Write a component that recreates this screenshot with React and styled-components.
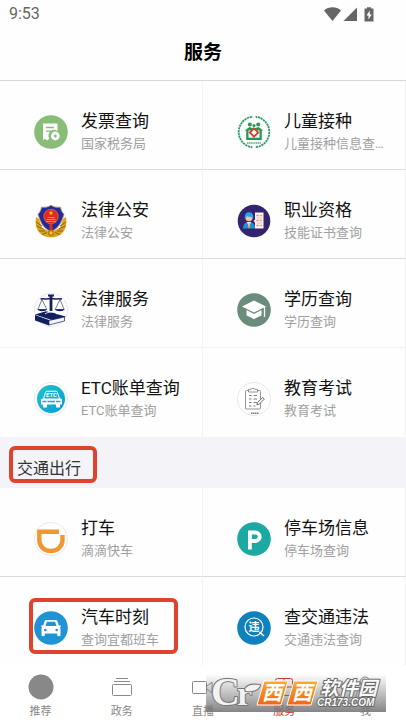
import React from "react";
import styled, { createGlobalStyle, css } from "styled-components";

const GlobalStyle = createGlobalStyle`
  * {
    box-sizing: border-box;
  }

  body {
    margin: 0;
    background: #fefefe;
    font-family: Roboto, "Noto Sans CJK SC", sans-serif;
  }
`;

const InvoiceIcon = () => (
  <svg viewBox="0 0 34 34">
    <circle cx="17" cy="17" r="16.8" fill="#88bd78" />
    <path d="M9 8.5h14.5v7.4a5.6 5.6 0 0 0-6.8 9.3l-1.7-1.5-2 1.8-2-1.8-2 1.6z" fill="#fff" />
    <path d="M12 12.5h8M12 16.2h5" stroke="#88bd78" strokeWidth="1.3" />
    <circle cx="21.3" cy="21" r="4.4" fill="#fff" />
    <path d="M21.3 19.2l1.8 1.8-1.8 1.8-1.8-1.8z" fill="#88bd78" />
  </svg>
);

const PoliceIcon = () => (
  <svg viewBox="0 0 34 34">
    <path d="M2 13C0 24 5 33 17 33.5 29 33 34 24 32 13l-3 2-3 9-9 4-9-4-3-9z" fill="#d9a21f" />
    <path
      d="M2 18l6 4M2.5 22l7 3M5 27h6M8 30.5l5-2M32 18l-6 4M31.5 22l-7 3M29 27h-6M26 30.5l-5-2"
      stroke="#8a5a10"
      strokeWidth="0.9"
    />
    <path
      d="M17 1.2c3 2.2 6 2.2 9.5 2 .5 3 1.5 5 3.5 7-2.5 8-5 14-13 17.3C9 24.2 6.5 18.2 4 10.2c2-2 3-4 3.5-7 3.5.2 6.500.2 9.500-2z"
      fill="#25289c"
      stroke="#b9906a"
      strokeWidth="0.9"
    />
    <circle cx="17" cy="12.5" r="7.3" fill="#df2a1c" stroke="#d98a3a" strokeWidth="0.6" />
    <circle cx="17" cy="9" r="1.7" fill="#f5b335" />
    <path d="M12.5 15.5h9M13.5 13.5h7M12 17.5h10" stroke="#f0a030" strokeWidth="0.9" />
    <path d="M15.5 20h3v6h-3z" fill="#e0301c" />
    <circle cx="17" cy="29" r="3" fill="#b9760f" />
    <circle cx="17" cy="29" r="1.7" fill="#f0c84a" />
  </svg>
);

const VaccineIcon = () => (
  <svg viewBox="0 0 34 34">
    <circle cx="17" cy="17" r="15.3" fill="#fff" stroke="#2d9a62" strokeWidth="1.8" strokeDasharray="2.2 0.6" />
    <path d="M17 0v4M17 30v4" stroke="#fff" strokeWidth="3" />
    <circle cx="12.8" cy="9.5" r="2" fill="#239a54" />
    <circle cx="21.2" cy="9.5" r="2" fill="#239a54" />
    <circle cx="17" cy="10.5" r="1.6" fill="#239a54" />
    <path d="M7.5 15.5l5-3.5 4.5 1.5 4.5-1.5 5 3.5h-1.7V25H9.2v-9.5z" fill="#239a54" />
    <path d="M11.5 15.5h11v7.2h-11z" fill="#fff" />
    <path d="M17 13.3l4.2 4.2-4.2 4.2-4.2-4.2z" fill="#fff" stroke="#e2352b" strokeWidth="1.8" />
    <path d="M10 28h14" stroke="#4aa878" strokeWidth="1.6" strokeDasharray="1.3 0.5" />
  </svg>
);

const JobIcon = () => (
  <svg viewBox="0 0 34 34">
    <circle cx="17" cy="17" r="16.3" fill="#34236f" />
    <path d="M6 24.5c0-5 2.5-6.5 6-6.5s6 1.5 6 6.5z" fill="#1f8fd8" />
    <path d="M10 18l2 5 2-5z" fill="#f4f6ff" />
    <path d="M11.5 19h1l.5 4-1 1.5-1-1.5z" fill="#f0a64a" />
    <circle cx="12" cy="13.5" r="3.7" fill="#e9c3ac" />
    <path
      d="M7.8 14c-.5-4 1.7-5.8 4.2-5.800s4.800 1.800 4.200 5.800c-1-1.600-5-.4-6-2-.5 1.200-1.600 1.300-2.400 2z"
      fill="#27a5e6"
    />
    <path d="M18 8.500h8.500v16H18v-6L16.500 17l1.500-1.500z" fill="#fff4ee" />
    <path d="M19.500 11.500h2M19.500 16.500h2M19.500 21.500h2" stroke="#e27a87" strokeWidth="1.3" />
    <path d="M22.500 11.500h2.700M22.500 16.500h2.700M22.500 21.500h2.700" stroke="#e9b04e" strokeWidth="1.3" />
    <path d="M19.500 14H25M19.500 19H25" stroke="#b9a6d8" strokeWidth="0.7" />
  </svg>
);

const LawIcon = () => (
  <svg viewBox="0 0 34 34">
    <circle cx="17" cy="17" r="16.5" fill="#fff" stroke="#e0e0e6" strokeWidth="0.8" />
    <path d="M15.6 3h2.800v15h-2.800zM14 1.500h6v2h-6z" fill="#12215e" />
    <path d="M6.500 6c4-.5 7 .5 10.500-.7C20.500 6.500 23.500 5.500 28 6" stroke="#12215e" strokeWidth="1.5" fill="none" />
    <path d="M8 6.500L3.800 16.500h9zM26 6.500l-4.800 10h9z" stroke="#12215e" strokeWidth="0.6" fill="none" />
    <path d="M3.500 16.300H13c-.7 2.600-8.800 2.600-9.500 0zM21 16.300h9.500c-.7 2.600-8.800 2.600-9.500 0z" fill="#12215e" />
    <path d="M1 21.500l11-3.200 20 5.200-13 4z" fill="#12215e" />
    <path d="M1 22v5.500l14 5V27z" fill="#12215e" />
    <path d="M15 27.500L30.500 24v4L15 32z" fill="#f4f5fb" stroke="#12215e" strokeWidth="0.7" />
    <path d="M11 21c3-2.500 9-2.500 12 0" stroke="#fff" strokeWidth="0.9" fill="#12215e" />
  </svg>
);

const EtcIcon = () => (
  <svg viewBox="0 0 34 34">
    <defs>
      <linearGradient id="etc" x1="0" y1="0" x2="1" y2="1">
        <stop offset="0" stopColor="#1fc4cf" />
        <stop offset="1" stopColor="#0899d6" />
      </linearGradient>
    </defs>
    <circle cx="17" cy="17" r="16.5" fill="#fff" stroke="#e2e2e2" strokeWidth="0.8" />
    <circle cx="17" cy="17" r="14" fill="url(#etc)" />
    <path
      d="M9.500 17l2-6.500c.2-.9.8-1.300 1.600-1.300h8.800c.8 0 1.400.4 1.600 1.300l2 6.500"
      stroke="#fff"
      strokeWidth="1"
      fill="none"
    />
    <text x="17.5" y="15" textAnchor="middle" fontSize="6" fontWeight="700" fill="#fff">
      ETC
    </text>
    <path d="M9 16.500h17.300c1 0 1.700.7 1.700 1.700v4.300H7v-4.300c0-1 .8-1.700 2-1.700z" fill="#fff" />
    <path d="M9 22h4v3.500H9zM22 22h4v3.500h-4z" fill="#fff" />
    <path d="M8.500 19.500h4M13.500 19.500H21M22 19.500h4.500" stroke="#14a9d4" strokeWidth="1.5" />
  </svg>
);

const DegreeIcon = () => (
  <svg viewBox="0 0 34 34">
    <circle cx="17" cy="17" r="16.8" fill="#698c7d" />
    <path d="M17 7.500l12 6-12 6-12-6z" fill="#fff" />
    <path d="M9.500 17l7.500 4 7.500-4v5.500c-2.200 1.200-4.500 1.800-7.500 3.700-3-1.900-5.300-2.500-7.500-3.700z" fill="#fff" />
    <path d="M27.500 14v10" stroke="#fff" strokeWidth="1.3" />
  </svg>
);

const ExamIcon = () => (
  <svg viewBox="0 0 34 34">
    <circle cx="17" cy="17" r="16.5" fill="#fff" stroke="#dcdcdc" strokeWidth="0.7" />
    <rect x="8.5" y="8.5" width="15" height="18.5" rx="1" fill="#fff" stroke="#777984" strokeWidth="0.8" />
    <path d="M11.500 7.300H14c.5-1 3.500-1 4 0h2.500V10h-9z" fill="#fff" stroke="#777984" strokeWidth="0.8" />
    <path
      d="M12 13.500h2.500M16.500 13.500H20M12 17h2.500M16.500 17H20M12 20.500h2.500M16.500 20.500H20M12 24h2.500M16.500 24h2"
      stroke="#6d7080"
      strokeWidth="0.9"
    />
    <path d="M20.500 20.500l5.200-5 1.600 1.600-5 5-2.400.8z" fill="#fff" stroke="#555866" strokeWidth="0.9" />
    <path d="M14 31.300h8" stroke="#777b88" strokeWidth="1.5" strokeDasharray="1.5 0.5" />
  </svg>
);

const DidiIcon = () => (
  <svg viewBox="0 0 34 34">
    <circle cx="17" cy="17" r="16.5" fill="#fff" stroke="#dedede" strokeWidth="0.7" />
    <path
      d="M25 9.800H5.300V18c0 6.300 4.700 11 11.500 11s11.700-4.700 11.700-11v-5"
      stroke="#f0982f"
      strokeWidth="4.4"
      fill="none"
    />
  </svg>
);

const ParkingIcon = () => (
  <svg viewBox="0 0 34 34">
    <circle cx="17" cy="17" r="16.8" fill="#1ba9a1" />
    <path d="M12.900 27.500V10.500h5.600a4 4 0 0 1 0 8.500h-5" stroke="#fff" strokeWidth="3.8" fill="none" />
  </svg>
);

const BusIcon = () => (
  <svg viewBox="0 0 34 34">
    <circle cx="17" cy="17" r="16.8" fill="#2093d5" />
    <path
      fillRule="evenodd"
      d="M12.500 9h9c.9 0 1.600.5 1.900 1.300l1.400 4.200h2c.6.500 0 1.300-1 1.500.5.6.7 1.200.7 2v6c0 .8-.5 1.200-1.200 1.200h-.9c-.8 0-1.200-.5-1.200-1.200v-1.500H10.800V24c0 .8-.5 1.200-1.200 1.200h-.9c-.8 0-1.200-.5-1.200-1.200v-6c0-.8.2-1.400.7-2-1-.2-1.600-1-1-1.500h2l1.400-4.200c.3-.8 1-1.300 1.900-1.300zm.4 1.800L11.500 15h11l-1.400-4.200z"
      fill="#fff"
    />
    <circle cx="11.3" cy="19" r="1.3" fill="#2093d5" />
    <circle cx="22.7" cy="19" r="1.3" fill="#2093d5" />
  </svg>
);

const ViolationIcon = () => (
  <svg viewBox="0 0 34 34">
    <circle cx="17" cy="17" r="16.8" fill="#0f82bd" />
    <circle cx="17" cy="16" r="9" fill="none" stroke="#fff" strokeWidth="1.2" />
    <path d="M22.500 21l4.500 4" stroke="#fff" strokeWidth="1.6" />
    <text x="17" y="20" textAnchor="middle" fontSize="11" fontWeight="700" fill="#fff">
      违
    </text>
  </svg>
);

const cityServices = [
  { title: "发票查询", desc: "国家税务局", icon: <InvoiceIcon /> },
  { title: "儿童接种", desc: "儿童接种信息查…", icon: <VaccineIcon /> },
  { title: "法律公安", desc: "法律公安", icon: <PoliceIcon /> },
  { title: "职业资格", desc: "技能证书查询", icon: <JobIcon /> },
  { title: "法律服务", desc: "法律服务", icon: <LawIcon />, light: true },
  { title: "学历查询", desc: "学历查询", icon: <DegreeIcon />, light: true },
  { title: "ETC账单查询", desc: "ETC账单查询", icon: <EtcIcon />, last: true },
  { title: "教育考试", desc: "教育考试", icon: <ExamIcon />, last: true },
];

const trafficServices = [
  { title: "打车", desc: "滴滴快车", icon: <DidiIcon /> },
  { title: "停车场信息", desc: "停车场查询", icon: <ParkingIcon /> },
  { title: "汽车时刻", desc: "查询宜都班车", icon: <BusIcon />, marked: true, last: true },
  { title: "查交通违法", desc: "交通违法查询", icon: <ViolationIcon />, last: true },
];

const tabs = [
  {
    label: "推荐",
    icon: (
      <svg viewBox="0 0 26 26">
        <circle cx="13" cy="13" r="12.5" fill="#888" />
      </svg>
    ),
  },
  {
    label: "政务",
    icon: (
      <svg viewBox="0 0 26 26" fill="none" stroke="#888">
        <rect x="3.5" y="10.5" width="19" height="11" rx="1" />
        <path d="M5 7.500h16M7 4.500h12" />
      </svg>
    ),
  },
  {
    label: "直播",
    icon: (
      <svg viewBox="0 0 26 26" fill="none" stroke="#888">
        <rect x="2.5" y="7.5" width="14" height="12" rx="1" />
        <path d="M17 12l5-4v11l-5-4" />
      </svg>
    ),
  },
  {
    label: "服务",
    active: true,
    icon: (
      <svg viewBox="0 0 26 26" fill="none" stroke="#c5392d">
        <rect x="4.5" y="4.5" width="17" height="17" rx="2" />
        <path d="M13 5v16M5 13h16" />
      </svg>
    ),
  },
  {
    label: "我",
    icon: (
      <svg viewBox="0 0 26 26" fill="none" stroke="#888">
        <circle cx="13" cy="8" r="5" />
        <path d="M4 23c0-6 4-8 9-8s9 2 9 8" />
      </svg>
    ),
  },
];

function ServiceGrid({ items }) {
  return (
    <Grid>
      {items.map((item) => (
        <Cell href="#" key={item.title} $light={item.light} $last={item.last}>
          <CellIcon>{item.icon}</CellIcon>
          <CellText>
            <CellTitle>{item.title}</CellTitle>
            <CellDesc>{item.desc}</CellDesc>
          </CellText>
          {item.marked && <CellMark />}
        </Cell>
      ))}
    </Grid>
  );
}

function Watermark() {
  return (
    <WatermarkBox>
      <svg viewBox="0 0 180 38" width="180" height="38">
        <defs>
          <linearGradient id="shade" x1="0" y1="0" x2="0" y2="1">
            <stop offset="0" stopColor="#777" stopOpacity="0" />
            <stop offset="1" stopColor="#777" stopOpacity="0.9" />
          </linearGradient>
          <linearGradient id="orange" x1="0" y1="0" x2="0" y2="1">
            <stop offset="0" stopColor="#f9ae2c" />
            <stop offset="1" stopColor="#ee6517" />
          </linearGradient>
        </defs>
        <rect width="180" height="38" fill="url(#shade)" />
        <g
          fill="#f2f2f2"
          stroke="#777"
          strokeWidth="2"
          paintOrder="stroke"
          strokeLinejoin="round"
          fontFamily="Liberation Serif, serif"
          fontWeight="700"
        >
          <text x="5" y="31" fontSize="40">
            C
          </text>
          <text x="31" y="31" fontSize="34">
            r
          </text>
          <path d="M39 15c2-4 8-5 15-4-1 5-8 7-14 6z" />
        </g>
        <path
          d="M58 7h24l-7 24H51zM88 7h24l-7 24H81z"
          fill="url(#orange)"
          stroke="#fff"
          strokeWidth="1"
          strokeLinejoin="round"
        />
        <g fontFamily="Noto Sans CJK SC, sans-serif" fontWeight="700" fontStyle="italic">
          <g fill="#fff" fontSize="20">
            <text x="56" y="26">
              西
            </text>
            <text x="86" y="26">
              西
            </text>
          </g>
          <g fill="#fafafa" stroke="#666" strokeWidth="2" paintOrder="stroke" strokeLinejoin="round">
            <text x="114" y="21" fontSize="19">
              软件园
            </text>
            <text x="111" y="32" fontSize="10" fontFamily="Liberation Sans, sans-serif">
              CR173.COM
            </text>
          </g>
        </g>
      </svg>
    </WatermarkBox>
  );
}

function App() {
  return (
    <Page>
      <GlobalStyle />
      <StatusBar>
        <span>9:53</span>
        <svg viewBox="0 0 52 16" width="52" height="16" fill="#666">
          <path d="M0 4.500C4.500.3 12.500.3 17 4.500L8.500 15z" />
          <path d="M33 1.500V15H19.500z" />
          <path d="M43 1.200h4v1.300h2.500v13h-9v-13H43z" />
          <path d="M45.700 4.500l-3.200 5h2v4l3.200-5h-2z" fill="#fff" />
        </svg>
      </StatusBar>
      <Header>
        <h1>服务</h1>
      </Header>
      <Main>
        <ServiceGrid items={cityServices} />
        <SectionHead>
          <h2>交通出行</h2>
          <SectionMark />
        </SectionHead>
        <ServiceGrid items={trafficServices} />
      </Main>
      <TabBar>
        {tabs.map((tab) => (
          <Tab type="button" key={tab.label} $active={tab.active}>
            {tab.icon}
            <span>{tab.label}</span>
          </Tab>
        ))}
        <Watermark />
      </TabBar>
    </Page>
  );
}

const Page = styled.div`
  display: flex;
  flex-direction: column;
  min-height: 100vh;
`;

const StatusBar = styled.div`
  display: flex;
  align-items: center;
  justify-content: space-between;
  padding: 4px 30px 4px 9px;
  line-height: 20px;
  font-size: 16px;
  color: #666;
`;

const Header = styled.header`
  padding: 11px 0 13px;
  border-bottom: 1px solid #d9d9d9;
  text-align: center;

  h1 {
    margin: 0;
    font-size: 19px;
    line-height: 28px;
    font-weight: 700;
    color: #000;
  }
`;

const Main = styled.main`
  flex: 1;
`;

const Grid = styled.div`
  display: grid;
  grid-template-columns: 1fr 1fr;
`;

const Cell = styled.a`
  position: relative;
  display: flex;
  align-items: center;
  gap: 13px;
  min-width: 0;
  padding: 28px 16px 14px 34px;
  border-right: 1px solid #f3f3f3;
  border-bottom: 1px solid ${({ $light }) => ($light ? "#f1f1f1" : "#dcdcdc")};
  text-decoration: none;

  ${({ $last }) =>
    $last &&
    css`
      border-bottom-color: #fefefe;
    `}
`;

const CellIcon = styled.span`
  flex: none;
  width: 34px;
  height: 34px;

  svg {
    display: block;
    width: 100%;
    height: 100%;
  }
`;

const CellText = styled.span`
  display: flex;
  flex-direction: column;
  min-width: 0;
`;

const CellTitle = styled.span`
  font-size: 17px;
  line-height: 24px;
  color: #111;
  white-space: nowrap;
`;

const CellDesc = styled.span`
  overflow: hidden;
  font-size: 13px;
  line-height: 22px;
  color: #a0a0a0;
  text-overflow: ellipsis;
  white-space: nowrap;
`;

const Mark = styled.span`
  position: absolute;
  border: 4px solid #e0432d;
  border-radius: 6px;
  pointer-events: none;
`;

const CellMark = styled(Mark)`
  top: 21px;
  right: 24px;
  bottom: 11px;
  left: 29px;
`;

const SectionMark = styled(Mark)`
  top: 9px;
  bottom: 5px;
  left: 9px;
  width: 88px;
`;

const SectionHead = styled.div`
  position: relative;
  padding: 20px 17px 7px;
  background: #f4f3f8;

  h2 {
    margin: 0;
    font-size: 16px;
    line-height: 24px;
    font-weight: 400;
    color: #333;
  }
`;

const TabBar = styled.nav`
  position: sticky;
  bottom: 0;
  display: flex;
  background: #fff;
`;

const Tab = styled.button`
  flex: 1;
  display: flex;
  flex-direction: column;
  align-items: center;
  gap: 4px;
  padding: 8px 0 2px;
  border: none;
  background: none;
  font-family: inherit;
  font-size: 11px;
  line-height: 16px;
  color: ${({ $active }) => ($active ? "#c5392d" : "#888")};

  svg {
    width: 26px;
    height: 26px;
  }
`;

const WatermarkBox = styled.div`
  position: absolute;
  right: 20px;
  bottom: 10px;
  height: 38px;
  pointer-events: none;

  svg {
    display: block;
    overflow: visible;
  }
`;

export default App;
